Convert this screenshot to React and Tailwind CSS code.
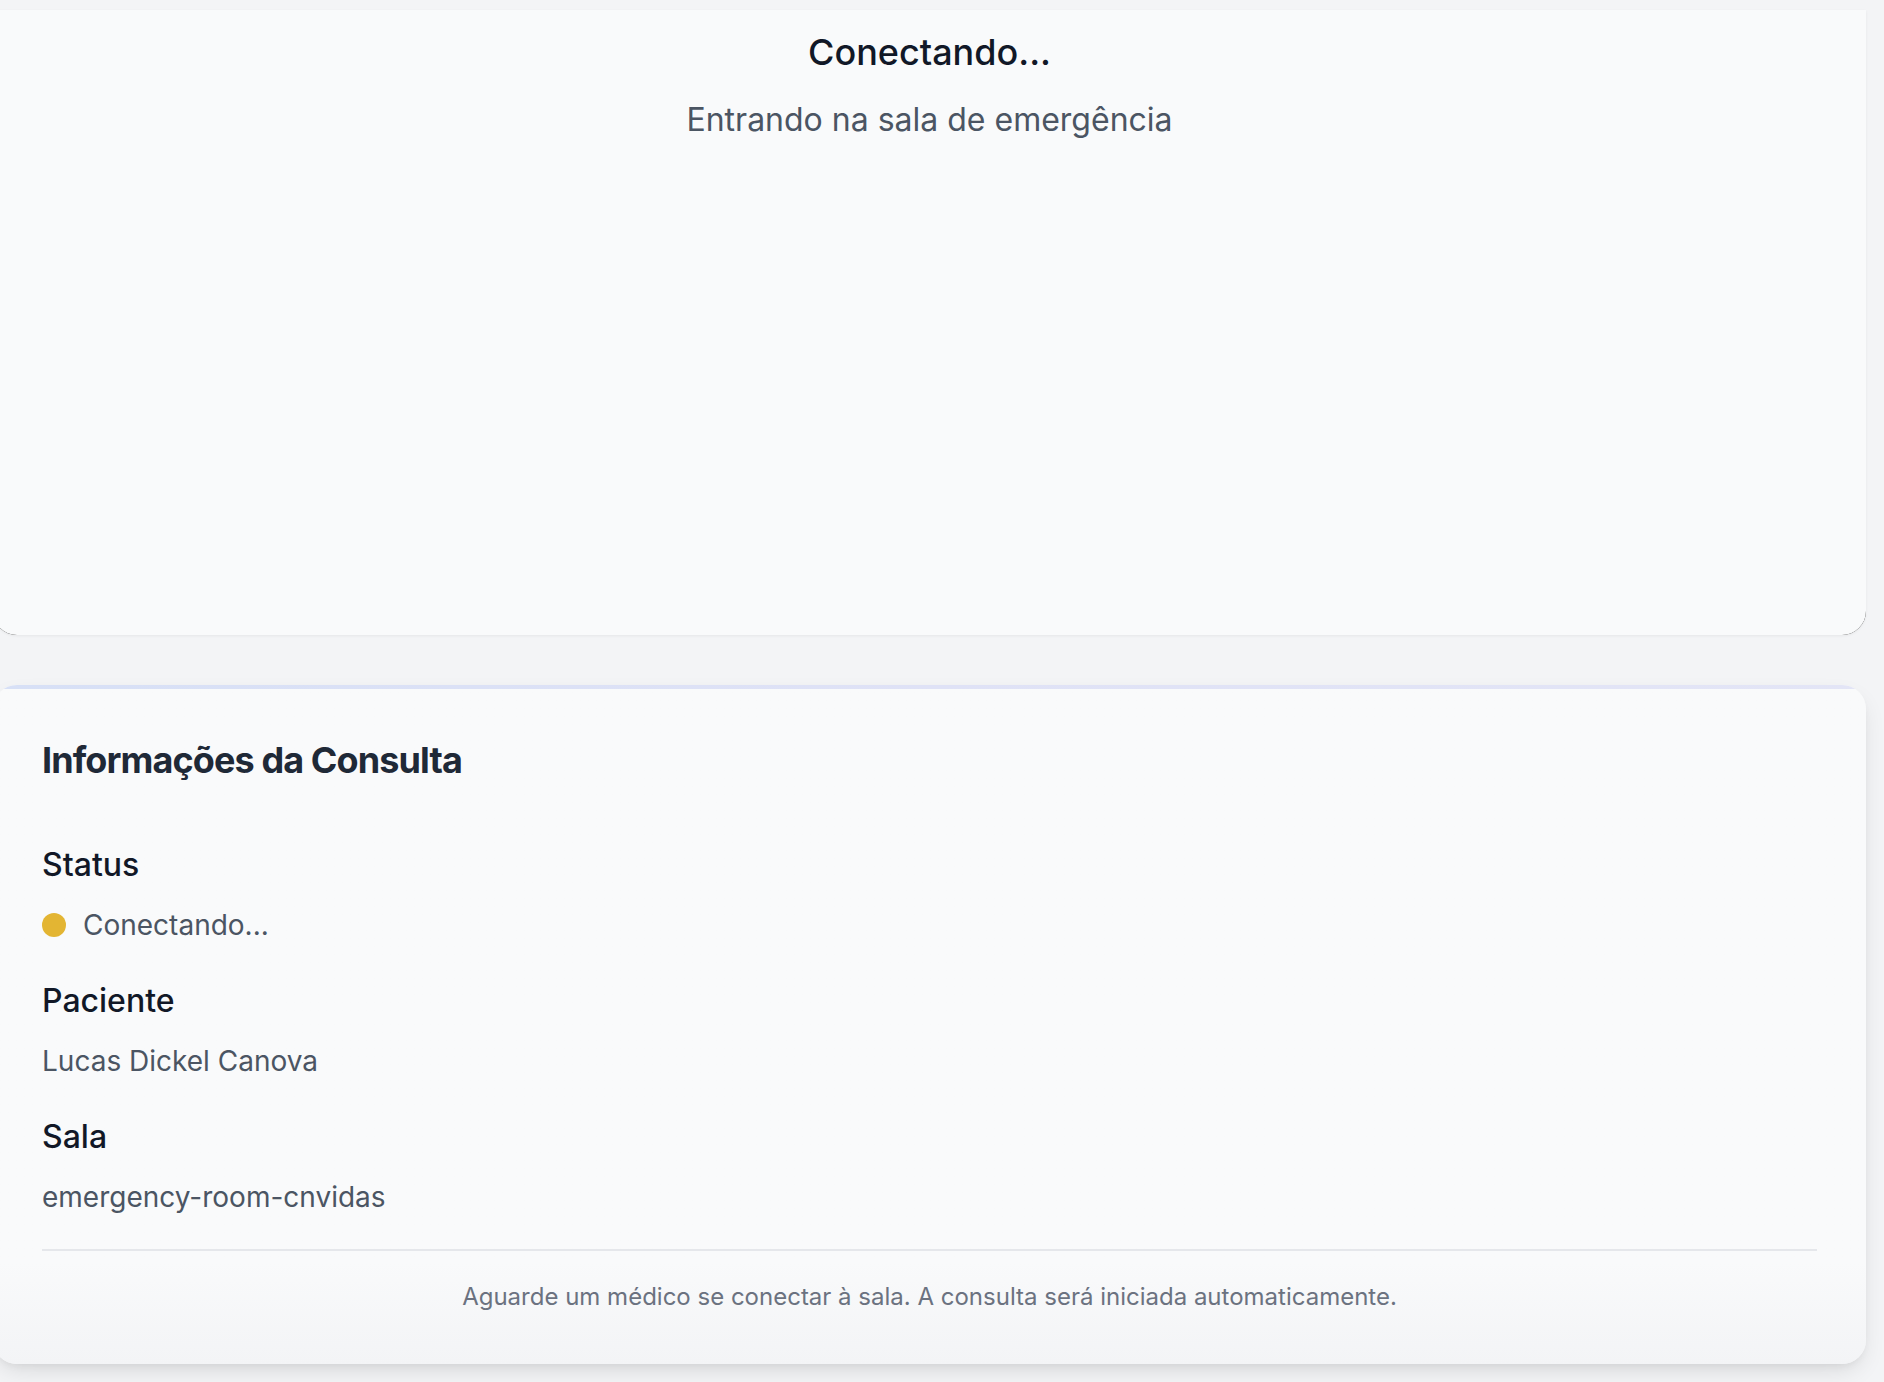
export default function App() {
  const items = [
    { label: "Status", value: "Conectando...", dot: true },
    { label: "Paciente", value: "Lucas Dickel Canova" },
    { label: "Sala", value: "emergency-room-cnvidas" },
  ];
  return (
    <div className="min-h-screen overflow-hidden bg-[#f3f4f6] pt-[10px] font-['Inter','Noto_Sans',sans-serif]">
      <div className="ml-[-7px] flex w-[1873px] flex-col gap-[50px]">
        <div className="relative h-[625px] rounded-b-[24px] bg-[#111] shadow-[0_1px_3px_rgba(0,0,0,0.06)]">
          <div className="absolute inset-0 flex flex-col items-center rounded-b-[24px] bg-[#f9fafb] pt-[14px]">
            <h2 className="text-[36px] font-medium leading-[56px] text-[#111827]">Conectando...</h2>
            <p className="mt-[16px] text-[32px] leading-[48px] text-[#4b5563]">Entrando na sala de emergência</p>
          </div>
        </div>

        <div className="overflow-hidden rounded-[24px] bg-gradient-to-b from-[#f9fafb] from-85% to-[#f3f4f6] shadow-[0_10px_25px_-5px_rgba(0,0,0,0.12),0_4px_10px_-4px_rgba(0,0,0,0.08)]">
          <div className="h-[4px] bg-gradient-to-r from-[#d7e0f6] via-[#dfe2f6] to-[#e3e5f6]" />
          <div className="px-[49px] pb-[51px] pt-[43px]">
            <h3 className="mb-[53px] text-[36px] font-bold leading-[56px] tracking-[-0.9px] text-[#1f2937]">
              Informações da Consulta
            </h3>
            <div className="flex flex-col gap-[32px]">
              {items.map((it) => (
                <div key={it.label} className="flex flex-col gap-[16px]">
                  <div className="text-[32px] font-medium leading-[48px] text-[#111827]">{it.label}</div>
                  <div className="flex items-center gap-[17px] text-[28px] leading-[40px] text-[#4b5563]">
                    {it.dot && <span className="h-[24px] w-[24px] rounded-full bg-[#e3b533]" />}
                    <span>{it.value}</span>
                  </div>
                </div>
              ))}
            </div>
            <div className="mt-[32px] border-t-2 border-[#e5e7eb] pt-[30px]">
              <p className="text-center text-[24px] leading-[32px] text-[#6b7280]">
                Aguarde um médico se conectar à sala. A consulta será iniciada automaticamente.
              </p>
            </div>
          </div>
        </div>
      </div>
    </div>
  );
}
